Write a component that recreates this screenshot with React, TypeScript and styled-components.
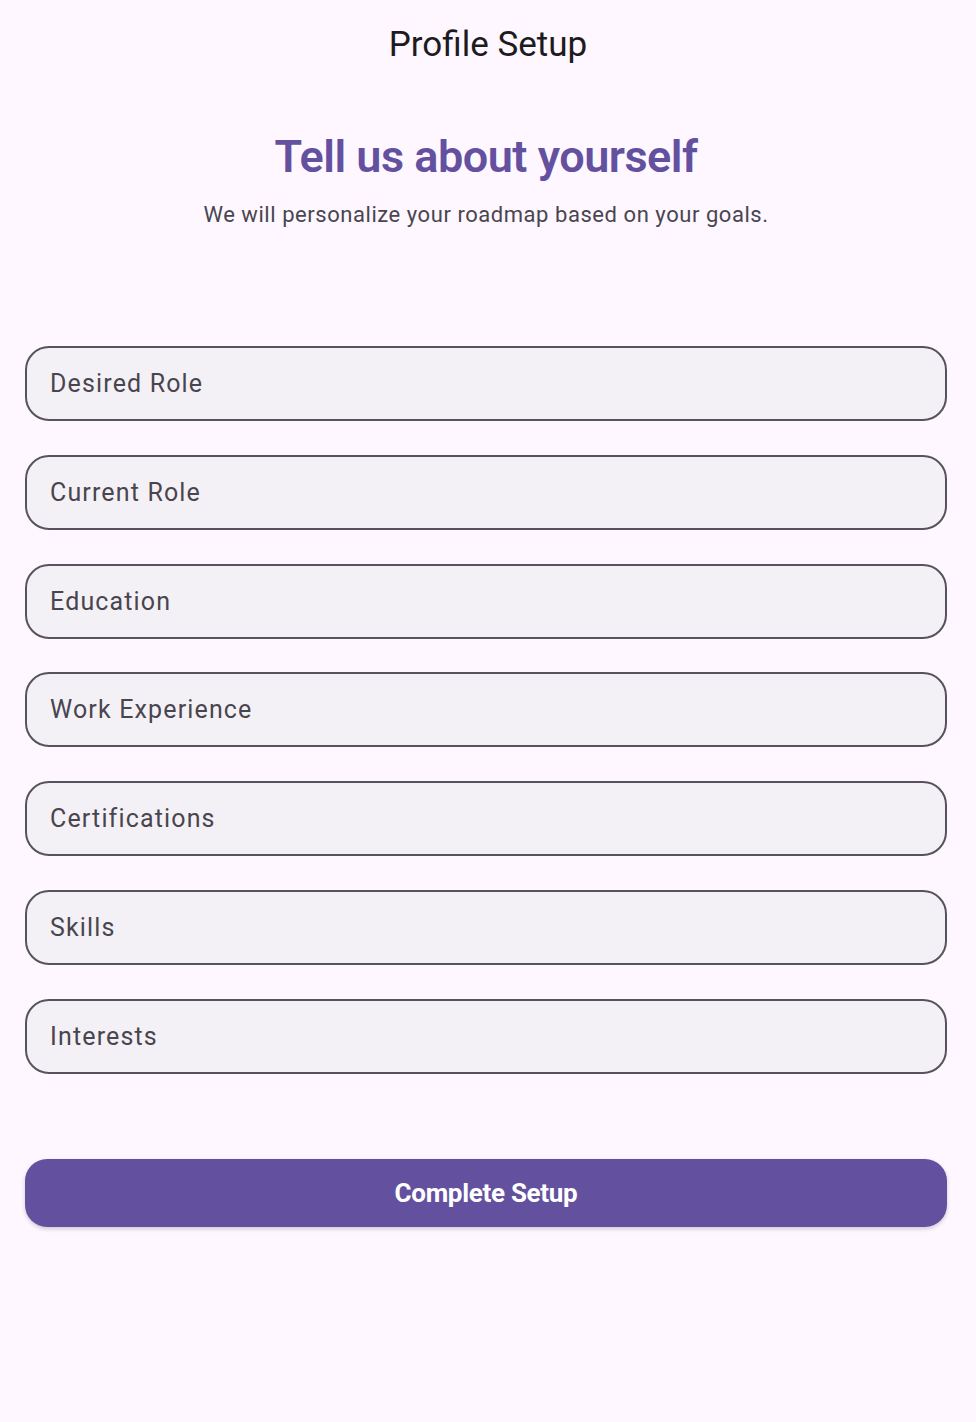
import styled, { createGlobalStyle } from 'styled-components';

const GlobalStyle = createGlobalStyle`
  html, body {
    margin: 0;
    padding: 0;
    background: #fef7ff;
  }
  body {
    font-family: Roboto, "Liberation Sans", sans-serif;
  }
`;

const Page = styled.div`
  width: 976px;
  min-height: 1422px;
  background: #fef7ff;
  box-sizing: border-box;
`;

const AppBar = styled.header`
  height: 88px;
  display: flex;
  align-items: center;
  justify-content: center;
`;

const AppBarTitle = styled.h1`
  margin: 0;
  font-size: 35px;
  font-weight: 400;
  color: #1d1b20;
`;

const Body = styled.main`
  padding: 0 29px 0 25px;
  display: flex;
  flex-direction: column;
`;

const Intro = styled.section`
  display: flex;
  flex-direction: column;
  align-items: center;
  padding-top: 42px;
  margin-bottom: 116px;
`;

const Heading = styled.h2`
  margin: 0;
  font-size: 45px;
  font-weight: 600;
  color: #6351a0;
  letter-spacing: -0.5px;
  line-height: 54px;
`;

const Subtitle = styled.p`
  margin: 16px 0 0;
  font-size: 22px;
  color: #49454f;
  letter-spacing: 0.55px;
  line-height: 30px;
`;

const Fields = styled.div`
  display: flex;
  flex-direction: column;
  gap: 33.8px;
`;

const Field = styled.input`
  height: 75px;
  box-sizing: border-box;
  width: 100%;
  border: 2px solid #57535d;
  border-radius: 24px;
  background: #f4f1f6;
  padding: 0 23px;
  font-family: Roboto, "Liberation Sans", sans-serif;
  font-size: 25px;
  letter-spacing: 1.15px;
  color: #1d1b20;
  outline: none;
  &::placeholder {
    color: #49454f;
  }
`;

const SubmitButton = styled.button`
  margin-top: 85px;
  height: 68px;
  width: 100%;
  border: none;
  border-radius: 22px;
  background: #6351a0;
  color: #ffffff;
  font-family: Roboto, "Liberation Sans", sans-serif;
  font-size: 26px;
  font-weight: 700;
  letter-spacing: -0.3px;
  box-shadow: 0 2px 4px rgba(0, 0, 0, 0.18);
  cursor: pointer;
`;

const fields = [
  'Desired Role',
  'Current Role',
  'Education',
  'Work Experience',
  'Certifications',
  'Skills',
  'Interests',
];

export default function App() {
  return (
    <Page>
      <GlobalStyle />
      <AppBar>
        <AppBarTitle>Profile Setup</AppBarTitle>
      </AppBar>
      <Body>
        <Intro>
          <Heading>Tell us about yourself</Heading>
          <Subtitle>We will personalize your roadmap based on your goals.</Subtitle>
        </Intro>
        <Fields>
          {fields.map((label) => (
            <Field key={label} placeholder={label} />
          ))}
        </Fields>
        <SubmitButton>Complete Setup</SubmitButton>
      </Body>
    </Page>
  );
}
